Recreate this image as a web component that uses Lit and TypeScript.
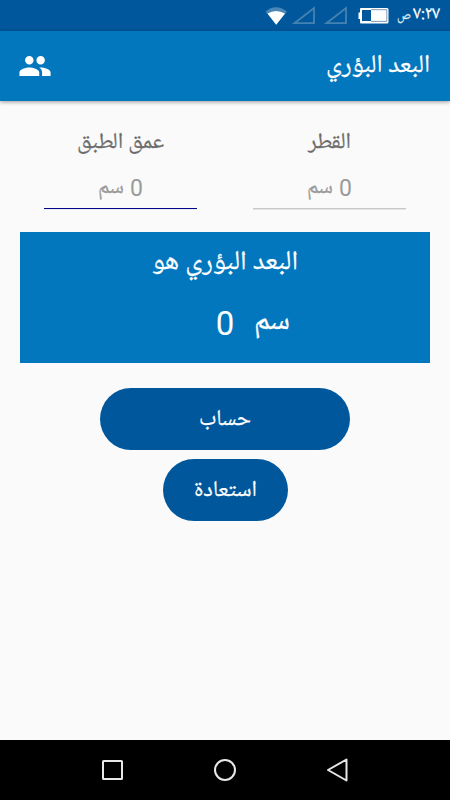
import { LitElement, html, css, svg } from "lit";
import { customElement, property } from "lit/decorators.js";

/** One run of Arabic text, condensed to a given advance width. */
@customElement("fit-text")
class FitText extends LitElement {
  @property() text = "";
  @property({ type: Number }) width = 50;
  @property({ type: Number }) size = 20;
  @property({ type: Number }) height = 30;
  @property({ type: Number }) base = 22;

  static styles = css`
    :host { display: block; flex: none; }
    svg { display: block; overflow: visible; }
    text { fill: currentColor; stroke: currentColor; stroke-width: .25px; direction: rtl; font-family: "Noto Naskh Arabic UI", "Noto Naskh Arabic", "DejaVu Sans", sans-serif; }
  `;

  render() {
    return html`<svg width=${this.width} height=${this.height}>
      ${svg`<text x=${this.width} y=${this.base} font-size=${this.size} textLength=${this.width} lengthAdjust="spacingAndGlyphs">${this.text}</text>`}
    </svg>`;
  }
}

@customElement("app-root")
class AppRoot extends LitElement {
  static styles = css`
    :host {
      display: flex; flex-direction: column; width: 450px; height: 800px;
      background: #fafafa; font-family: Roboto, sans-serif; overflow: hidden; direction: ltr;
    }
    svg { display: block; flex: none; }
    .status { height: 31px; background: #01579b; display: flex; flex: none; color: #fff; }
    .status .icons { margin-left: 264px; }
    .status .half { margin-left: 7px; color: #dce8f2; }
    .status .clock { margin-left: 2px; }
    .bar {
      height: 70px; flex: none; background: #0277bd; color: #fff; display: flex; align-items: center;
      justify-content: space-between; padding: 0 20px 0 18px; box-sizing: border-box;
      box-shadow: 0 1px 4px rgba(0, 0, 0, .4); position: relative;
    }
    .fields { display: flex; flex: none; justify-content: space-between; padding: 25px 44px 0; height: 131px; box-sizing: border-box; }
    .field { width: 153px; color: #6c6c6c; display: flex; flex-direction: column; align-items: center; }
    .hint { display: flex; width: 100%; height: 52px; justify-content: center; color: #9a9a9a; border-bottom: 1px solid #c8c8c8; box-shadow: 0 1px #e4e4e4; }
    .hint b { font: 23px/34px Roboto, sans-serif; margin: 16px 0 0 6px; }
    .focus .hint { border-color: #04048c; box-shadow: 0 1px #ececf6; }
    .result { margin: 0 20px; height: 131px; flex: none; background: #0277bd; color: #fff; display: flex; flex-direction: column; align-items: center; }
    .value { display: flex; align-items: flex-start; margin-left: 56px; }
    .value b { font: 33px/40px Roboto, sans-serif; margin: 10px 20px 0 0; }
    .actions { display: flex; flex-direction: column; align-items: center; padding-top: 25px; gap: 9px; flex: 1; }
    button { border: 0; padding: 0; background: #01579b; color: #fff; height: 62px; width: 250px; border-radius: 31px; display: flex; justify-content: center; }
    .reset { width: 125px; }
    .nav { height: 60px; background: #000; flex: none; display: flex; justify-content: center; align-items: center; gap: 82px; }
  `;

  field(label: string, width: number, focused: boolean) {
    return html`<div class="field ${focused ? "focus" : ""}">
      <fit-text text=${label} width=${width} size="22.5" height="30" base="24.5"></fit-text>
      <div class="hint"><fit-text text="سم" width="26" size="22" height="50" base="40"></fit-text><b>0</b></div>
    </div>`;
  }

  render() {
    return html`
      <div class="status">
        <svg class="icons" width="126" height="31" viewBox="264 0 126 31">
          <path d="M265.500 11.500Q276 3 287 11.500L276.200 24.800Z" fill="#4a87b7" />
          <path d="M267.500 13.500Q276 8.500 285 13.500L276.200 24.800Z" fill="#fff" />
          <path d="M294.500 23.200H314V8ZM326.500 23.200H346V8Z" fill="none" stroke="#4482b2" stroke-width="1.8" />
          <path d="M361 8H387Q388.500 8 388.500 9.500V22Q388.500 23.500 387 23.500H361Q360 23.500 360 22V19H358.500V12.500H360V9Q360 8 361 8Z" fill="#fff" />
          <path d="M362 10H371V21H362Z" fill="#01579b" />
          <path d="M371 9.700H386.800V21.400H371" fill="none" stroke="#8099ba" />
        </svg>
        <fit-text class="half" text="ص" width="14" size="14.5" height="31" base="20.500"></fit-text>
        <fit-text class="clock" text="٧:٢٧" width="27" size="18.500" height="31" base="21"></fit-text>
      </div>
      <div class="bar">
        <svg width="34" height="34" viewBox="0 0 24 24" fill="#fff">
          <path d="M16 11c1.660 0 2.990-1.340 2.990-3S17.660 5 16 5s-3 1.340-3 3 1.340 3 3 3zm-8 0c1.660 0 2.990-1.340 2.990-3S9.660 5 8 5 5 6.340 5 8s1.340 3 3 3zm0 2c-2.330 0-7 1.170-7 3.500V19h14v-2.500c0-2.330-4.670-3.500-7-3.500zm8 0c-.290 0-.620.020-.970.050 1.160.840 1.970 1.970 1.970 3.450V19h6v-2.500c0-2.330-4.670-3.500-7-3.500z" />
        </svg>
        <fit-text text="البعد البؤري" width="104" size="25" height="40" base="29"></fit-text>
      </div>
      <div class="fields">
        ${this.field("عمق الطبق", 87, true)}
        ${this.field("القطر", 43, false)}
      </div>
      <div class="result">
        <fit-text text="البعد البؤري هو" width="146" size="27" height="62" base="41"></fit-text>
        <div class="value"><b>0</b><fit-text text="سم" width="36" size="31" height="60" base="39"></fit-text></div>
      </div>
      <div class="actions">
        <button><fit-text text="حساب" width="52" size="22.5" height="62" base="39.5"></fit-text></button>
        <button class="reset"><fit-text text="استعادة" width="63" size="22.5" height="62" base="39.5"></fit-text></button>
      </div>
      <div class="nav">
        <svg width="30" height="30" viewBox="98 755 30 30" fill="none" stroke="#e8e8e8" stroke-width="2"><rect x="103" y="761" width="19" height="18" rx=".6" /></svg>
        <svg width="30" height="30" viewBox="210 755 30 30" fill="none" stroke="#e8e8e8" stroke-width="2"><circle cx="225" cy="770" r="10" /></svg>
        <svg width="30" height="30" viewBox="322 755 30 30" fill="none" stroke="#e8e8e8" stroke-width="2" stroke-linejoin="round"><path d="M328 770L346.500 759.500V780.500Z" /></svg>
      </div>`;
  }
}
